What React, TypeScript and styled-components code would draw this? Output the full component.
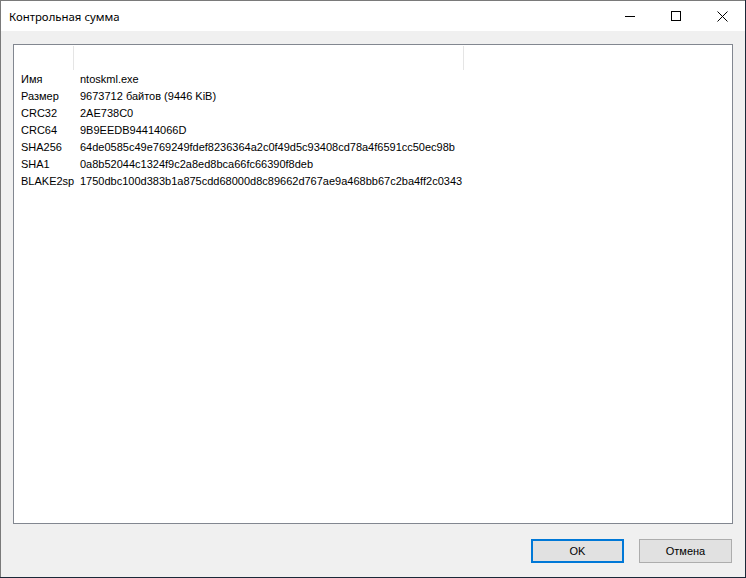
import React from "react";
import styled, { createGlobalStyle } from "styled-components";

const rows: [string, string][] = [
  ["Имя", "ntoskml.exe"],
  ["Размер", "9673712 байтов (9446 KiB)"],
  ["CRC32", "2AE738C0"],
  ["CRC64", "9B9EEDB94414066D"],
  ["SHA256", "64de0585c49e769249fdef8236364a2c0f49d5c93408cd78a4f6591cc50ec98b"],
  ["SHA1", "0a8b52044c1324f9c2a8ed8bca66fc66390f8deb"],
  ["BLAKE2sp", "1750dbc100d383b1a875cdd68000d8c89662d767ae9a468bb67c2ba4ff2c0343"],
];

const App = (): JSX.Element => {
  return (
    <>
      <GlobalStyle />
      <Window>
        <TitleBar>
          <Title>Контрольная сумма</Title>
          <Caption>
            <CaptionButton>
              <svg width="10" height="10" viewBox="0 0 10 10">
                <line x1="0" y1="5.5" x2="10" y2="5.5" stroke="#000" strokeWidth="1" />
              </svg>
            </CaptionButton>
            <CaptionButton>
              <svg width="10" height="10" viewBox="0 0 10 10">
                <rect x="0.5" y="0.5" width="9" height="9" fill="none" stroke="#000" strokeWidth="1" />
              </svg>
            </CaptionButton>
            <CaptionButton>
              <svg width="11" height="11" viewBox="0 0 11 11">
                <path d="M0.5 0.5 L10.5 10.5 M10.5 0.5 L0.5 10.5" stroke="#000" strokeWidth="1" />
              </svg>
            </CaptionButton>
          </Caption>
        </TitleBar>
        <Body>
          <ListBox>
            <Header>
              <HeaderCell $width={59} />
              <HeaderCell $width={389} />
            </Header>
            {rows.map(([name, value]) => (
              <Row key={name}>
                <Cell $width={59} $pad={7}>{name}</Cell>
                <Cell $width={389} $pad={6}>{value}</Cell>
              </Row>
            ))}
          </ListBox>
        </Body>
        <Footer>
          <Button $default>OK</Button>
          <Button>Отмена</Button>
        </Footer>
      </Window>
    </>
  );
};

const GlobalStyle = createGlobalStyle`
  html, body {
    margin: 0;
    padding: 0;
    background: #1b2838;
  }
  body {
    font-family: "Liberation Sans", Arial, sans-serif;
    font-size: 11px;
    color: #000;
  }
`;

const Window = styled.div`
  display: flex;
  flex-direction: column;
  width: 745px;
  height: 577px;
  box-sizing: border-box;
  border-left: 1px solid #7a7a7a;
  border-top: 1px solid #7a7a7a;
  background: #f0f0f0;
`;

const TitleBar = styled.div`
  display: flex;
  align-items: center;
  height: 30px;
  background: #fff;
`;

const Title = styled.div`
  flex: 1;
  padding-left: 8px;
  font-family: "Noto Sans", "Open Sans", sans-serif;
  font-size: 11.4px;
  color: #000;
`;

const Caption = styled.div`
  display: flex;
  height: 100%;
`;

const CaptionButton = styled.div`
  display: flex;
  align-items: center;
  justify-content: center;
  width: 46px;
  height: 100%;
`;

const Body = styled.div`
  flex: 1;
  display: flex;
  padding: 13px 12px 0 12px;
`;

const ListBox = styled.div`
  flex: 1;
  background: #fff;
  border: 1px solid #828790;
`;

const Header = styled.div`
  display: flex;
  height: 25px;
`;

const HeaderCell = styled.div<{ $width: number }>`
  width: ${(p) => p.$width}px;
  height: 24px;
  margin-top: 1px;
  border-right: 1px solid #e5e5e5;
`;

const Row = styled.div`
  display: flex;
  height: 17px;
  line-height: 18px;
  white-space: nowrap;
`;

const Cell = styled.div<{ $width: number; $pad: number }>`
  width: ${(p) => p.$width + 1}px;
  padding-left: ${(p) => p.$pad}px;
  box-sizing: border-box;
  overflow: visible;
`;

const Footer = styled.div`
  display: flex;
  justify-content: flex-end;
  gap: 15px;
  padding: 15px 13px 14px 0;
`;

const Button = styled.button<{ $default?: boolean }>`
  width: 93px;
  height: 24px;
  box-sizing: border-box;
  background: #e1e1e1;
  border: ${(p) => (p.$default ? "2px solid #0078d7" : "1px solid #adadad")};
  font-family: "Liberation Sans", Arial, sans-serif;
  font-size: 11px;
  color: #000;
  padding: 0;
`;

export default App;
